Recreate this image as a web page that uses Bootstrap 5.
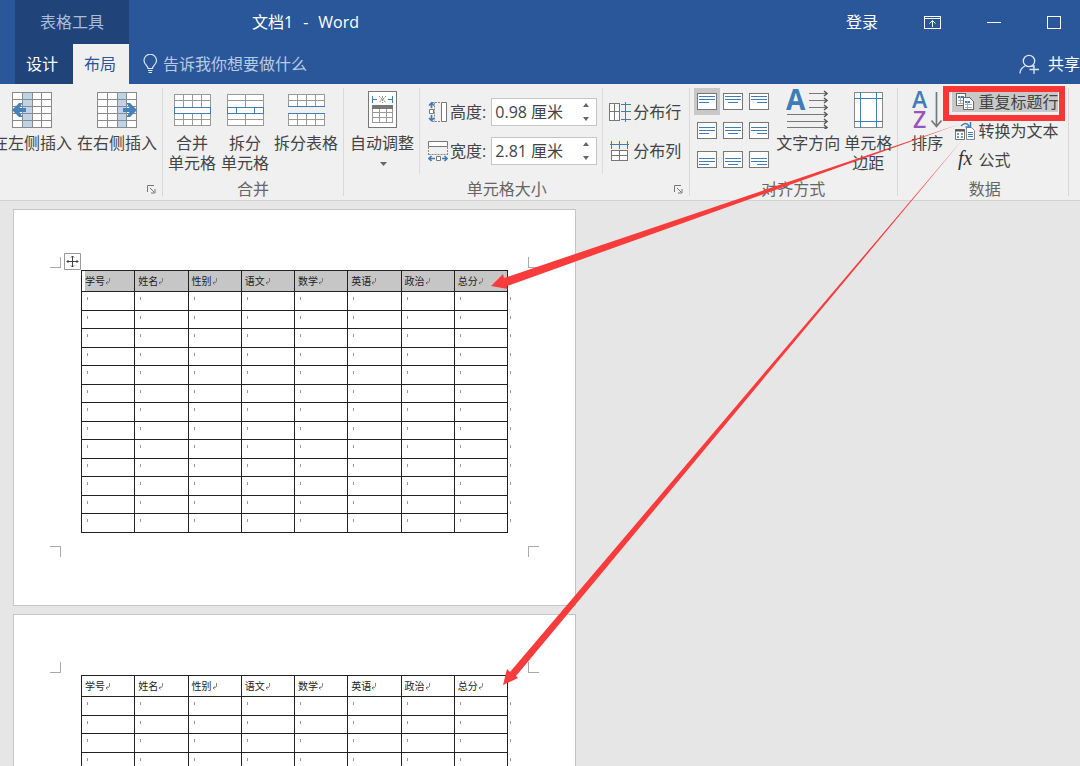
<!DOCTYPE html>
<html lang="zh-CN">
<head>
<meta charset="utf-8">
<meta name="viewport" content="width=device-width, initial-scale=1">
<title>文档1 - Word</title>
<link href="https://cdn.jsdelivr.net/npm/bootstrap@5.3.0/dist/css/bootstrap.min.css" rel="stylesheet">
<style>
  body { font-family: "Open Sans", "Noto Sans CJK SC", sans-serif; font-size: 16px; line-height: 20px; color: #444; background: #e6e6e6; }
  svg { display: block; flex: none; }
  button { font: inherit; color: inherit; background: none; border: 0; padding: 0; }
  .crisp { shape-rendering: crispEdges; }

  /* title bar */
  .topbar { background: #2a579a; color: #fff; padding-left: 15px; }
  .context-tools { width: 114px; background: #204479; }
  .context-title { height: 44px; color: #a9bddb; }
  .tab-row { height: 40px; }
  .tab-link { color: #fff; text-decoration: none; }
  .tab-design { width: 58px; padding-left: 11px; }
  .tab-layout { width: 56px; padding-left: 11px; background: #f0f0f0; color: #2a579a; }
  .doc-title { margin-left: 123px; gap: 10px; }
  .window-tools { gap: 46px; padding-right: 19px; }
  .tell-me { gap: 5px; padding-left: 14px; }
  .tell-me input { width: 200px; border: 0; padding: 0; background: none; color: #b9cae4; outline: 0; }
  .tell-me input::placeholder { color: #b9cae4; opacity: 1; }

  /* ribbon */
  .ribbon { background: #f0f0f0; border-bottom: 1px solid #d2d2d2; height: 117px; overflow: hidden; white-space: nowrap; }
  .rgroup { border-right: 1px solid #d9d9d9; margin: 4px 0; padding: 0 5px; }
  .rgroup-insert { margin-left: -8px; padding-left: 0; }
  .rgroup-body { height: 90px; gap: 5px; }
  .rgroup-label { color: #666; height: 20px; margin-top: 1px; text-align: center; }
  .rgroup-size { padding-left: 6px; padding-right: 8px; }
  .rgroup-size .rgroup-label { padding-right: 18px; }
  .launcher { right: 6px; bottom: 2px; }
  .big-btn { display: flex; flex-direction: column; align-items: center; }
  .big-btn svg { height: 41px; margin-bottom: 4px; }
  .sub-col { border-left: 1px solid #dcdcdc; padding: 10px 0 0 8px; height: 86px; }
  .sub-col-tight { padding-left: 6px; }
  .field-row { height: 28px; margin-bottom: 11px; gap: 2px; }
  .spin { width: 106px; height: 28px; background: #fff; border: 1px solid #c6c6c6; margin-left: 3px; }
  .spin input { width: 84px; border: 0; padding: 0 0 0 3px; outline: 0; color: #444; background: none; line-height: 20px; }
  .align-grid { display: grid; grid-template-columns: repeat(3, 26px); grid-auto-rows: 27px; row-gap: 2px; }
  .align-grid button { display: grid; place-items: center; }
  .align-grid .chosen { background: #c8c8c8; }
  .small-btn { display: flex; align-items: center; gap: 3px; height: 20px; margin-bottom: 9px; }
  .rgroup-align { padding-left: 4px; }
  .rgroup-data { padding-left: 13px; padding-right: 10px; }
  .data-list { padding-top: 4px; margin-left: 4px; }
  .data-list .chosen { background: #c8c8c8; }
  .data-list button { padding-left: 3px; }

  /* pages */
  .desk { padding: 8px 0 0 13px; overflow: hidden; }
  .paper { width: 563px; background: #fff; border: 1px solid #c6c6c6; padding: 60px 47px; margin-bottom: 8px; }
  .print-area { padding: 0 21px 12px 20px; }
  .corner { width: 11px; height: 11px; border: 0 solid #aaa; }
  .c-tl { left: -11px; top: -13px; border-width: 0 1px 1px 0; }
  .c-tr { right: -11px; top: -13px; border-width: 0 0 1px 1px; }
  .c-bl { left: -11px; bottom: -12px; border-width: 1px 1px 0 0; }
  .c-br { right: -11px; bottom: -12px; border-width: 1px 0 0 1px; }
  .handle { left: 3px; top: -17px; }
  .marks { width: 427px; table-layout: fixed; border-collapse: collapse; color: #222; font-size: 10px; line-height: 12px; }
  .marks th, .marks td { border: 1px solid #222; padding: 0 0 0 3px; position: relative; }
  .marks th { height: 21px; padding-bottom: 1px; font-weight: 400; }
  .marks th svg { display: inline-block; }
  .marks td { height: 19px; }
  .marks tr:nth-child(even) td { height: 18px; }
  .marks td::before, .marks td:last-child::after { content: ""; position: absolute; left: 5px; top: 5px; width: 1px; height: 3px; background: #999; }
  .marks td:last-child::after { left: 55px; }
  .selected th { background: #c6c6c6; }
  .selected th:first-child { box-shadow: inset 3px 0 #fff; }
  .callouts { inset: 0; pointer-events: none; }
</style>
</head>
<body class="vh-100 overflow-hidden position-relative d-flex flex-column">

<svg width="0" height="0" class="position-absolute" aria-hidden="true">
  <symbol id="launch" viewBox="0 0 9 9"><path d="M.5 7V.5H7M3 3l4 4M8 4v4H4" fill="none" stroke="#777"/></symbol>
  <symbol id="ret" viewBox="0 0 6 8"><path d="M4.500 0v3q0 2-3.500 2M2.500 3.500 1 5l1.500 1.500" fill="none" stroke="#666" stroke-width=".8"/></symbol>
</svg>

<header class="topbar d-flex flex-shrink-0 overflow-hidden">
  <div class="context-tools flex-shrink-0">
    <div class="context-title d-flex align-items-center justify-content-center">表格工具</div>
    <nav class="tab-row d-flex">
      <a href="#" class="tab-link tab-design d-flex align-items-center">设计</a>
      <a href="#" class="tab-link tab-layout d-flex align-items-center" aria-current="page">布局</a>
    </nav>
  </div>
  <div class="flex-grow-1">
    <div class="context-title d-flex align-items-center justify-content-between text-white">
      <div class="doc-title d-flex"><span>文档1</span><span>-</span><span>Word</span></div>
      <div class="window-tools d-flex align-items-center">
        <button type="button">登录</button>
        <button type="button" aria-label="功能区显示选项"><svg class="crisp" width="17" height="13" fill="none" stroke="#fff"><path d="M.5.500h16v12H.5zM.5 2.500h16"/><path d="M8.500 11V5M5.500 7.500l3-3 3 3" shape-rendering="auto"/></svg></button>
        <button type="button" aria-label="最小化"><svg class="crisp" width="14" height="13"><path d="M0 6.500h14" stroke="#fff"/></svg></button>
        <button type="button" aria-label="最大化"><svg class="crisp" width="14" height="13"><path d="M.5.500h13v12H.5z" fill="none" stroke="#fff"/></svg></button>
      </div>
    </div>
    <div class="tab-row d-flex align-items-center justify-content-between">
      <label class="tell-me d-flex align-items-center">
        <svg width="15" height="20" viewBox="0 0 15 20" fill="none" stroke="#dce6f4" stroke-width="1.200"><path d="M5 14.500c0-3-4-4-4-8a6.200 6.200 0 0 1 12.500 0c0 4-4 5-4 8zM5 16.500h4.500M5.500 18.500h3.500"/></svg>
        <input type="text" placeholder="告诉我你想要做什么" aria-label="告诉我你想要做什么">
      </label>
      <button type="button" class="d-flex align-items-center gap-2 text-white">
        <svg width="21" height="20" viewBox="0 0 21 20" fill="none" stroke="#dce6f4" stroke-width="1.300"><circle cx="10" cy="7" r="5.700"/><path d="M1 19.500c0-4 2-6 5-7.500M13.500 12l2 2M10.500 15.500H20M15 11v9"/></svg>共享
      </button>
    </div>
  </div>
</header>

<section class="ribbon d-flex flex-shrink-0" aria-label="布局">
  <div class="rgroup rgroup-insert position-relative flex-shrink-0">
    <div class="rgroup-body d-flex">
      <button type="button" class="big-btn">
        <svg width="40" height="41"><g class="crisp"><path d="M.5 4.500h39v35H.5z" fill="#fff"/><path d="M10 4h10v36H10z" fill="#bed2e8"/><path d="M.5 4.500h39v35H.5zM10.500 4v36M20.500 4v36M29.500 4v36M0 11.500h40M0 18.500h40M0 25.500h40M0 32.500h40" fill="none" stroke="#8a8a8a"/></g><path d="M0 22l7-7h3.500l-3 5H14v4H7.500l3 5H7z" fill="#4681ba"/></svg>
        <span>在左侧插入</span></button>
      <button type="button" class="big-btn">
        <svg width="40" height="41"><g class="crisp"><path d="M.5 4.500h39v35H.5z" fill="#fff"/><path d="M20 4h10v36H20z" fill="#bed2e8"/><path d="M.5 4.500h39v35H.5zM10.500 4v36M20.500 4v36M29.500 4v36M0 11.500h40M0 18.500h40M0 25.500h40M0 32.500h40" fill="none" stroke="#8a8a8a"/></g><path d="M40 22l-7-7h-3.500l3 5H26v4h6.500l-3 5H33z" fill="#4681ba"/></svg>
        <span>在右侧插入</span></button>
    </div>
    <button type="button" class="launcher position-absolute" aria-label="行和列设置"><svg width="9" height="9"><use href="#launch"/></svg></button>
  </div>

  <div class="rgroup flex-shrink-0">
    <div class="rgroup-body d-flex">
      <button type="button" class="big-btn">
        <svg class="crisp" width="37" height="41" fill="none" stroke="#999"><path d="M.5 6.500h36v31H.5z" fill="#fff"/><path d="M0 12.500h37M0 31.500h37M9.500 6v13M18.500 6v13M27.500 6v13M9.500 25v13M18.500 25v13M27.500 25v13"/><path d="M0 19.500h37M0 25.500h37M.5 19v7M36.500 19v7" stroke="#3f7db9"/></svg>
        <span>合并<br>单元格</span></button>
      <button type="button" class="big-btn">
        <svg class="crisp" width="37" height="41" fill="none" stroke="#999"><path d="M.5 6.500h36v31H.5z" fill="#fff"/><path d="M0 12.500h37M0 31.500h37M18.500 6v13M18.500 25v13"/><path d="M0 19.500h37M0 25.500h37M.5 19v7M36.500 19v7M9.500 19v7M27.500 19v7" stroke="#3f7db9"/></svg>
        <span>拆分<br>单元格</span></button>
      <button type="button" class="big-btn">
        <svg class="crisp" width="37" height="41" fill="none" stroke="#999"><path d="M.5 6.500h36v12H.5zM.5 25.500h36v12H.5z" fill="#fff"/><path d="M0 12.500h37M0 31.500h37M9.500 6v13M18.500 6v13M27.500 6v13M9.500 25v13M18.500 25v13M27.500 25v13"/><path d="M0 18.500h37M0 25.500h37" stroke="#3f7db9"/></svg>
        <span>拆分表格</span></button>
    </div>
    <div class="rgroup-label">合并</div>
  </div>

  <div class="rgroup rgroup-size position-relative flex-shrink-0">
    <div class="rgroup-body d-flex">
      <button type="button" class="big-btn">
        <svg width="29" height="41"><g class="crisp" fill="none"><path d="M.5 3.500h28v36H.5z" fill="#fff" stroke="#777"/><path d="M4.500 19v15.500h20V19M4 24.500h21M4 29.500h21M11.500 19v16M18.500 19v16" stroke="#999"/><path d="M4 17h21v4H4z" fill="#777"/></g><path d="M4.500 8v7M24.500 8v7M5 11.500h4M20 11.500h4" stroke="#3f7db9" fill="none"/><path d="M11 8l3 3-3 4M18 8l-3 3 3 4M14.500 8v7" stroke="#888" fill="none" stroke-dasharray="2 1"/></svg>
        <span>自动调整</span>
        <svg style="height:6px;margin:8px 0 0 4px" width="8" height="6"><path d="M0 1h7l-3.500 4z" fill="#666"/></svg></button>
      <div class="sub-col">
        <div class="field-row d-flex align-items-center">
          <svg width="20" height="22" fill="none"><path d="M13.500 1.500h5v19h-5z" fill="#fff" stroke="#777"/><path d="M4 1.500h9M4 20.500h9M6.500 1.500v19" stroke="#888" stroke-dasharray="2 1"/><path d="M1.500 8.500h4v4h-4z" fill="#fff" stroke="#777"/><path d="M3.500 2v5M3.500 14v6M1 4.500 3.500 2 6 4.500M1 17l2.500 2.500L6 17" stroke="#3f7db9" stroke-width="1.700"/></svg>
          <label for="cell-h">高度:</label>
          <div class="spin d-flex align-items-center"><input id="cell-h" type="text" value="0.98 厘米"><div class="d-flex flex-column gap-2"><button type="button" aria-label="增加高度"><svg width="17" height="5"><path d="M7 4h6L10 0z" fill="#666"/></svg></button><button type="button" aria-label="减小高度"><svg width="17" height="5"><path d="M7 1h6l-3 4z" fill="#666"/></svg></button></div></div>
        </div>
        <div class="field-row d-flex align-items-center">
          <svg width="20" height="22" fill="none"><path d="M.5 1.500h19v5H.5z" fill="#fff" stroke="#777"/><path d="M.5 7v9M19.500 7v9M.5 14.500h19" stroke="#888" stroke-dasharray="2 1"/><path d="M8.500 16.500h4v4h-4z" fill="#fff" stroke="#777"/><path d="M1 18.500h6M14 18.500h5M3.500 16 1 18.500 3.500 21M16.500 16l2.500 2.500-2.500 2.500" stroke="#3f7db9" stroke-width="1.700"/></svg>
          <label for="cell-w">宽度:</label>
          <div class="spin d-flex align-items-center"><input id="cell-w" type="text" value="2.81 厘米"><div class="d-flex flex-column gap-2"><button type="button" aria-label="增加宽度"><svg width="17" height="5"><path d="M7 4h6L10 0z" fill="#666"/></svg></button><button type="button" aria-label="减小宽度"><svg width="17" height="5"><path d="M7 1h6l-3 4z" fill="#666"/></svg></button></div></div>
        </div>
      </div>
      <div class="sub-col sub-col-tight">
        <button type="button" class="field-row d-flex align-items-center">
          <svg class="crisp" width="22" height="20" fill="none"><path d="M.5 1.500h10v17H.5zM0 9.500h11M5.500 1v18" fill="#fff" stroke="#777"/><path d="M16.500 0v20M12 2.500h10M12 9.500h10M12 17.500h10" stroke="#3f7db9"/></svg>分布行</button>
        <button type="button" class="field-row d-flex align-items-center">
          <svg class="crisp" width="22" height="20" fill="none"><path d="M2.500 9.500h16v10h-16zM10.500 9v11M2 14.500h17" fill="#fff" stroke="#777"/><path d="M1 3.500h19M2.500 0v8M10.500 0v8M18.500 0v8" stroke="#3f7db9"/></svg>分布列</button>
      </div>
    </div>
    <div class="rgroup-label">单元格大小</div>
    <button type="button" class="launcher position-absolute" aria-label="单元格大小设置"><svg width="9" height="9"><use href="#launch"/></svg></button>
  </div>

  <div class="rgroup rgroup-align flex-shrink-0">
    <div class="rgroup-body d-flex gap-1">
      <div class="align-grid" id="alignGrid"></div>
      <button type="button" class="big-btn">
        <svg width="44" height="41" viewBox="0 0 44 41"><text x="0" y="22" font-family="Open Sans, sans-serif" font-weight="700" font-size="28" fill="#3f7db9">A</text><path d="M23 5.500h18M23 12.500h18M23 19.500h18M1 26.500h40M1 33.500h40M1 39.500h40" stroke="#777" class="crisp"/><path d="M38 3l3 2.500L38 8M38 10l3 2.500-3 2.500M38 17l3 2.500-3 2.500M38 24l3 2.500-3 2.500M38 31l3 2.500-3 2.500M38 37l3 2.500-3 2" fill="none" stroke="#555" stroke-width="1.500"/></svg>
        <span>文字方向</span></button>
      <button type="button" class="big-btn">
        <svg class="crisp" width="29" height="41" fill="none"><path d="M.5 4.500h28v35H.5z" fill="#fff" stroke="#888"/><path d="M6.500 4v36M22.500 4v36M0 10.500h29M0 33.500h29" stroke="#3f7db9"/></svg>
        <span>单元格<br>边距</span></button>
    </div>
    <div class="rgroup-label">对齐方式</div>
  </div>

  <div class="rgroup rgroup-data flex-shrink-0">
    <div class="rgroup-body d-flex">
      <button type="button" class="big-btn">
        <svg width="32" height="41" viewBox="0 0 32 41"><text x="1" y="20" font-family="Open Sans, sans-serif" font-weight="600" font-size="23" fill="#3f7db9">A</text><text x="2" y="40" font-family="Open Sans, sans-serif" font-weight="600" font-size="23" fill="#9a55bd">Z</text><path d="M25.500 4v34M20.500 32.500l5 6 5-6" fill="none" stroke="#777" stroke-width="1.700"/></svg>
        <span>排序</span></button>
      <div class="data-list">
        <button type="button" class="small-btn chosen">
          <svg width="20" height="18" class="crisp" fill="none"><path d="M1.500.500h9v12h-9z" fill="#fff" stroke="#666"/><path d="M3 3.500h6" stroke="#3f7db9" stroke-width="2"/><path d="M3 7.500h5M3 10.500h5M5.500 3v8" stroke="#aaa"/><path d="M8.500 4.500h6l4 4v8h-10z" fill="#fff" stroke="#666"/><path d="M10 8.500h5" stroke="#3f7db9" stroke-width="2"/><path d="M10 11.500h7M10 14.500h7M12.500 8v8" stroke="#aaa"/></svg>重复标题行</button>
        <button type="button" class="small-btn">
          <svg width="20" height="20" fill="none"><path d="M.5 8.500h9v10h-9z" fill="#fff" stroke="#777"/><path d="M0 9.500h10" stroke="#555" stroke-width="2"/><path d="M2 13h6M2 16h6" stroke="#3f7db9" stroke-dasharray="2 2" stroke-width="1.500"/><path d="M11.500 6.500h5l3 3v9h-8z" fill="#fff" stroke="#888"/><path d="M13 11.500h5M13 13.500h5M13 15.500h5" stroke="#3f7db9"/><path d="M6 5q5-5 8 0M15.500 1v5h-5" stroke="#3f7db9" stroke-width="1.500"/></svg>转换为文本</button>
        <button type="button" class="small-btn">
          <svg width="20" height="20"><text x="3" y="15" font-family="Liberation Serif, serif" font-style="italic" font-size="20" fill="#333">fx</text></svg>公式</button>
      </div>
    </div>
    <div class="rgroup-label">数据</div>
  </div>
</section>

<main class="desk flex-grow-1">
  <article class="paper">
    <div class="print-area position-relative">
      <span class="corner c-tl position-absolute"></span><span class="corner c-tr position-absolute"></span><span class="corner c-bl position-absolute"></span><span class="corner c-br position-absolute"></span>
      <svg class="handle position-absolute" width="17" height="17" fill="none"><path d="M.5.500h16v16H.5z" fill="#fff" stroke="#999"/><path d="M8.500 3v11M3 8.500h11M7 4.500 8.500 3 10 4.500M7 12.500 8.500 14l1.500-1.500M4.500 7 3 8.500 4.500 10M12.500 7 14 8.500 12.500 10" stroke="#444"/></svg>
      <table class="marks" data-rows="13"><thead class="selected"></thead><tbody></tbody></table>
    </div>
  </article>
  <article class="paper">
    <div class="print-area position-relative">
      <span class="corner c-tl position-absolute"></span><span class="corner c-tr position-absolute"></span><span class="corner c-bl position-absolute"></span><span class="corner c-br position-absolute"></span>
      <table class="marks" data-rows="13"><thead></thead><tbody></tbody></table>
    </div>
  </article>
</main>

<!-- red frame round the repeat-header command, with arrows to both header rows -->
<svg class="callouts position-absolute" width="1080" height="766" fill="#f93b3b" aria-hidden="true">
  <rect x="946" y="89" width="116" height="29" fill="none" stroke="#f93535" stroke-width="6"/>
  <path d="M960 124 L504 278 L503 274 L491 286 L508 289 L507 286z"/>
  <path d="M964 138 L510 672 L507 669 L503 685 L518 678 L516 676z"/>
</svg>

<script src="https://cdn.jsdelivr.net/npm/bootstrap@5.3.0/dist/js/bootstrap.bundle.min.js"></script>
<script>
  const heads = ['学号', '姓名', '性别', '语文', '数学', '英语', '政治', '总分'];
  document.querySelectorAll('.marks').forEach(t => {
    t.tHead.innerHTML = '<tr>' + heads.map(h => `<th scope="col">${h}<svg width="6" height="8"><use href="#ret"/></svg></th>`).join('') + '</tr>';
    t.tBodies[0].innerHTML = ('<tr>' + '<td></td>'.repeat(heads.length) + '</tr>').repeat(+t.dataset.rows);
  });

  // nine cell alignments: three lines of text, placed by row and column
  const grid = document.getElementById('alignGrid');
  ['靠上', '中部', '靠下'].forEach((v, r) => ['左', '中', '右'].forEach((h, c) => {
    const y = [3.5, 5.5, 7.5][r];
    const line = (w, dy) => { const x = [2, (20 - w) / 2, 18 - w][c]; return `M${x} ${y + dy}h${w}`; };
    grid.insertAdjacentHTML('beforeend',
      `<button type="button" class="${r + c ? '' : 'chosen'}" aria-label="${v}${h}对齐"><svg class="crisp" width="20" height="17" fill="none"><path d="M.5.5h19v16H.5z" fill="#fff" stroke="#777"/><path d="${line(16, 0)}${line(10, 6)}" stroke="#3f7db9"/><path d="${line(16, 3)}" stroke="#3f7db9"/></svg></button>`);
  }));
</script>
</body>
</html>
